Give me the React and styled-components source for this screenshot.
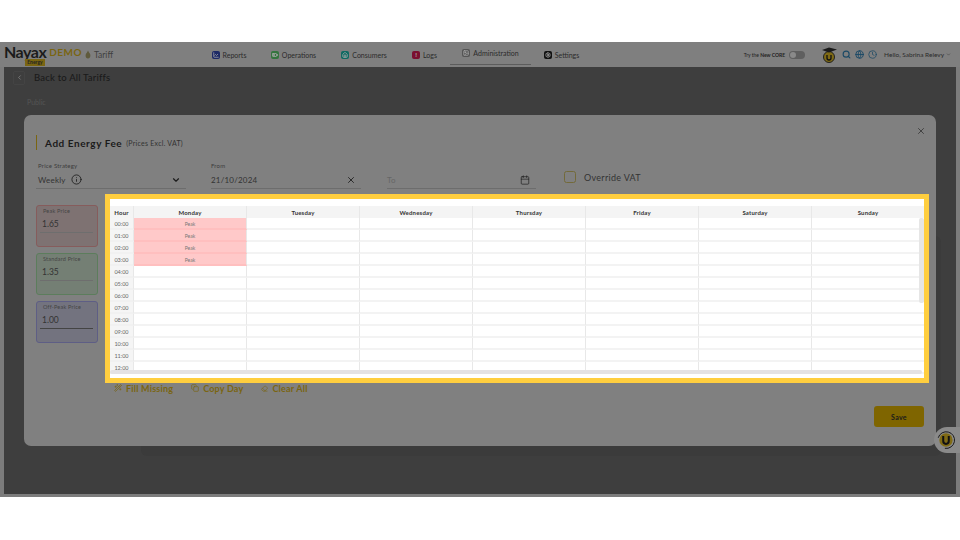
import React from 'react';
import styled, { createGlobalStyle } from 'styled-components';
import {
  ChevronLeft, ChevronDown, X, Calendar, Info, Search, Globe, Clock, Wand2, Copy, Eraser,
  LineChart, BatteryMedium, Home, Image, Settings,
} from 'lucide-react';

const Global = createGlobalStyle`
  html, body { margin: 0; padding: 0; background: #fff; }
  body { font-family: Lato, "Noto Sans", sans-serif; overflow: hidden; }
  * { box-sizing: border-box; }
`;

const Page = styled.div`
  width: 960px;
  height: 540px;
  padding: 42px 0 43px;
`;

const Frame = styled.div`
  position: relative;
  height: 455px;
  background: #3e3e3e;
  border-left: 4px solid #7c7c7c;
  border-right: 4px solid #7c7c7c;
  border-bottom: 3px solid #7c7c7c;
  display: flex;
  flex-direction: column;
`;

const Header = styled.div`
  height: 25px;
  margin: 0 -4px;
  background: #7f7f7f;
  display: flex;
  align-items: center;
  padding: 0 9px 0 4px;
  flex: none;
`;

const Logo = styled.div`
  position: relative;
  width: 74px;
  height: 22px;
  display: flex;
  align-items: flex-start;
  gap: 3px;
  margin-top: 1px;
  flex: none;
`;

const LogoWord = styled.span`
  font: 700 16px/14px Lato, sans-serif;
  margin-top: 1px;
  color: #1b1b1b;
  letter-spacing: -0.5px;
`;

const LogoDemo = styled.span`
  font: 700 10px/14px Lato, sans-serif;
  margin-top: 1px;
  color: #7a6511;
  letter-spacing: 0.5px;
`;

const LogoTag = styled.span`
  position: absolute;
  left: 21px;
  top: 15px;
  width: 20px;
  height: 7px;
  background: #7a6511;
  color: #222;
  font: 700 5px/7px Lato, sans-serif;
  text-align: center;
`;

const Crumb = styled.div`
  margin-left: 7px;
  display: flex;
  align-items: center;
  gap: 3px;
  color: #404040;
  font-size: 8.5px;
  width: 118px;
  flex: none;
`;

const Nav = styled.nav`
  display: flex;
  height: 25px;
  margin-left: 8px;
`;

const NavItem = styled.div`
  height: ${p => (p.$active ? '23px' : '25px')};
  display: flex;
  align-items: center;
  justify-content: center;
  gap: 3px;
  width: ${p => p.$w}px;
  margin-right: ${p => p.$gap}px;
  font-size: 7px;
  color: #2b2b2b;
  border-bottom: ${p => (p.$active ? '1px solid #5c5c5c' : 'none')};
`;

const NavIcon = styled.span`
  width: 8px;
  height: 8px;
  border-radius: 2px;
  background: ${p => p.$color};
  color: #a9a9a9;
  flex: none;
  display: flex;
  align-items: center;
  justify-content: center;
  font-size: 6px;
  font-weight: 900;
  line-height: 8px;
`;

const HeaderRight = styled.div`
  margin-left: auto;
  display: flex;
  align-items: center;
`;

const TryText = styled.span`
  font-size: 5px;
  color: #222;
  white-space: nowrap;
  b { font-weight: 700; }
`;

const Toggle = styled.span`
  width: 16px;
  height: 8px;
  margin-left: 4px;
  border-radius: 5px;
  background: #5f5f5f;
  display: flex;
  align-items: center;
  padding-left: 1px;
  &::before {
    content: '';
    width: 6px;
    height: 6px;
    border-radius: 50%;
    background: #8a8a8a;
  }
`;

const Grad = styled.svg`
  margin-left: 17px;
  flex: none;
`;

const Tools = styled.div`
  display: flex;
  gap: 4px;
  margin-left: 5px;
  color: #1c4a66;
  align-items: center;
`;

const Hello = styled.span`
  margin-left: 7px;
  font-size: 6.5px;
  color: #2b2b2b;
  display: flex;
  align-items: center;
  gap: 2px;
  white-space: nowrap;
`;

const Backdrop = styled.div`
  flex: 1;
  padding: 0 20px;
  display: flex;
  flex-direction: column;
  color: #222;
`;

const BackRow = styled.div`
  height: 21px;
  display: flex;
  align-items: center;
  gap: 9px;
  font-size: 9.5px;
  font-weight: 500;
  color: #1a1a1a;
  letter-spacing: 0.2px;
  margin-left: -11px;
`;

const BackBox = styled.span`
  width: 12px;
  height: 14px;
  border: 1px solid #444;
  border-radius: 2px;
  display: flex;
  align-items: center;
  justify-content: center;
  color: #999;
`;

const PublicLabel = styled.div`
  margin: 10px 0 0 3px;
  height: 10px;
  font-size: 7px;
  color: #555;
`;

const GhostPanel = styled.div`
  position: absolute;
  top: 194px;
  left: 137px;
  right: 15px;
  bottom: 38px;
  background: #3b3b3b;
  border-radius: 6px;
`;

const Modal = styled.div`
  margin-top: 7px;
  height: 331px;
  background: #808080;
  border-radius: 7px;
  padding: 20px 7px 0 12px;
  display: flex;
  flex-direction: column;
  position: relative;
  z-index: 1;
`;

const CloseBtn = styled.span`
  position: absolute;
  top: 11px;
  right: 10px;
  color: #222;
  display: flex;
`;

const TitleRow = styled.div`
  display: flex;
  align-items: center;
  border-left: 1.5px solid #7a6511;
  height: 15px;
  padding-left: 8px;
  gap: 4px;
`;

const Title = styled.span`
  font-size: 10px;
  font-weight: 700;
  color: #1b1b1b;
  letter-spacing: 0.55px;
`;

const TitleNote = styled.span`
  font-size: 7px;
  color: #333;
  letter-spacing: 0.25px;
`;

const FieldRow = styled.div`
  display: flex;
  margin-top: 11px;
  height: 28px;
`;

const Field = styled.div`
  width: ${p => p.$w}px;
  margin-right: ${p => p.$gap}px;
  padding-left: ${p => p.$pl || 0}px;
  padding-right: ${p => p.$pr}px;
  border-bottom: 1px solid #6d6d6d;
  display: flex;
  flex-direction: column;
  height: 28px;
`;

const FieldLabel = styled.label`
  font-size: 6px;
  color: #3c3c3c;
  height: 10px;
  letter-spacing: 0.2px;
  line-height: 10px;
`;

const FieldValue = styled.div`
  display: flex;
  align-items: center;
  gap: 5px;
  height: 13px;
  margin-top: 2px;
  font-size: 8px;
  color: ${p => (p.$muted ? '#666' : '#333')};
  letter-spacing: 0.2px;
  svg { color: #1b1b1b; }
  svg:last-child { margin-left: auto; }
`;

const Check = styled.div`
  display: flex;
  align-items: center;
  gap: 8px;
  height: 22px;
  font-size: 9px;
  color: #333;
  letter-spacing: 0.3px;
  margin-top: 5px;
  &::before {
    content: '';
    width: 10px;
    height: 10px;
    border: 1px solid #736a3a;
    border-radius: 2.5px;
  }
`;

const Body = styled.div`
  display: flex;
  margin-top: 5px;
  height: 189px;
`;

const Prices = styled.div`
  width: 62px;
  display: flex;
  flex-direction: column;
  gap: 6px;
  padding-top: 11px;
  flex: none;
`;

const PriceCard = styled.div`
  height: 42px;
  border: 1px solid ${p => p.$color};
  border-radius: 3px;
  background: ${p => p.$bg};
  padding: 1px 4px 0 3px;
  display: flex;
  flex-direction: column;
  align-items: stretch;
`;

const PriceLabel = styled.span`
  font-size: 5.5px;
  line-height: 8px;
  padding-left: 3px;
  color: #444;
  letter-spacing: 0.2px;
  white-space: nowrap;
`;

const PriceValue = styled.span`
  font-size: 8.5px;
  line-height: 14px;
  padding: 2px 0 1px 2px;
  height: 18px;
  color: #333;
  border-bottom: 1px solid ${p => (p.$focus ? '#444' : '#6e6e6e')};
`;

const Highlight = styled.div`
  width: 824px;
  height: 189px;
  margin-left: 7px;
  background: #fff;
  border: 5px solid #ffce3f;
  display: flex;
  flex-direction: column;
  flex: none;
`;

const Schedule = styled.div`
  margin-top: 7px;
  height: 169px;
  overflow: hidden;
  position: relative;
`;

const Row = styled.div`
  display: grid;
  grid-template-columns: 24px repeat(7, 113px);
  height: 12px;
`;

const HeadCell = styled.div`
  background: #f4f4f4;
  border-right: 1px solid #e8e8e8;
  font-size: 6px;
  font-weight: 700;
  color: #333;
  display: flex;
  align-items: center;
  justify-content: center;
  letter-spacing: 0.2px;
`;

const HourCell = styled.div`
  background: #f5f5f5;
  border-right: 1px solid #e8e8e8;
  border-bottom: 2px solid #f1f1f1;
  padding-top: 1px;
  font-size: 5.5px;
  color: #666;
  display: flex;
  align-items: center;
  justify-content: center;
`;

const SlotCell = styled.div`
  background: ${p => (p.$peak ? '#ffc9c9' : '#fff')};
  border-right: 1px solid #e8e8e8;
  border-bottom: 2px solid ${p => (p.$peak ? '#ffbfbf' : '#f3f3f3')};
  padding-top: 1px;
  font-size: 5px;
  color: #777;
  display: flex;
  align-items: center;
  justify-content: center;
`;

const ScrollY = styled.span`
  position: absolute;
  right: 0;
  top: 12px;
  width: 5px;
  height: 85px;
  background: #e6e6e6;
  border-radius: 2px;
`;

const ScrollX = styled.span`
  position: absolute;
  left: 0;
  right: 2px;
  bottom: 1px;
  height: 4px;
  background: #e4e2e4;
  border-radius: 2px;
`;

const Actions = styled.div`
  display: flex;
  gap: 18px;
  margin-left: 78px;
  height: 10px;
  align-items: center;
`;

const ActionBtn = styled.span`
  display: flex;
  align-items: center;
  gap: 4px;
  font-size: 9px;
  font-weight: 700;
  color: #7a6511;
  letter-spacing: 0.2px;
`;

const Footer = styled.div`
  display: flex;
  justify-content: flex-end;
  margin-top: 13px;
`;

const SaveBtn = styled.button`
  width: 50px;
  height: 21px;
  margin-right: 5px;
  border: none;
  border-radius: 3px;
  background: #7f6500;
  color: #1b1b1b;
  font: 700 7px Lato, sans-serif;
  letter-spacing: 0.3px;
  padding: 0;
`;

const HelpBubble = styled.div`
  position: absolute;
  right: -4px;
  top: 385px;
  width: 26px;
  height: 26px;
  border-radius: 13px 0 0 13px;
  background: #8a8a8a;
  display: flex;
  align-items: center;
  padding-left: 2px;
  z-index: 2;
`;

const hours = ['00:00', '01:00', '02:00', '03:00', '04:00', '05:00', '06:00', '07:00', '08:00', '09:00', '10:00', '11:00', '12:00'];
const days = ['Monday', 'Tuesday', 'Wednesday', 'Thursday', 'Friday', 'Saturday', 'Sunday'];

const navItems = [
  { label: 'Reports', color: '#1d2a66', w: 36, gap: 23, icon: <LineChart size={6} strokeWidth={3} /> },
  { label: 'Operations', color: '#35753f', w: 47, gap: 24, icon: <BatteryMedium size={6} strokeWidth={3} /> },
  { label: 'Consumers', color: '#0f6a62', w: 46, gap: 24, icon: <Home size={6} strokeWidth={3} /> },
  { label: 'Logs', color: '#7a1030', w: 27, gap: 12, icon: '!' },
  { label: 'Administration', color: '#555', w: 81, gap: 12, active: true, icon: <Image size={6} strokeWidth={3} /> },
  { label: 'Settings', color: '#111', w: 37, gap: 0, icon: <Settings size={6} strokeWidth={3} /> },
];

function Grid() {
  return (
    <Schedule>
      <Row>
        <HeadCell>Hour</HeadCell>
        {days.map(d => <HeadCell key={d}>{d}</HeadCell>)}
      </Row>
      {hours.map((h, i) => (
        <Row key={h}>
          <HourCell>{h}</HourCell>
          {days.map((d, j) => (
            <SlotCell key={d} $peak={j === 0 && i < 4}>{j === 0 && i < 4 ? 'Peak' : ''}</SlotCell>
          ))}
        </Row>
      ))}
      <ScrollY />
      <ScrollX />
    </Schedule>
  );
}

export default function App() {
  return (
    <Page>
      <Global />
      <Frame>
        <Header>
          <Logo>
            <LogoWord>Nayax</LogoWord>
            <LogoDemo>DEMO</LogoDemo>
            <LogoTag>Energy</LogoTag>
          </Logo>
          <Crumb>
            <svg width="6" height="9" viewBox="0 0 6 9"><path d="M3 0.5 L4 2.5 C6 4 6 8.5 3 8.5 C0 8.5 0 4 2 2.5 Z" fill="#5f5a3c" /></svg>
            Tariff
          </Crumb>
          <Nav>
            {navItems.map(n => (
              <NavItem key={n.label} $w={n.w} $gap={n.gap} $active={n.active}>
                <NavIcon $color={n.color}>{n.icon}</NavIcon>
                {n.label}
              </NavItem>
            ))}
          </Nav>
          <HeaderRight>
            <TryText>Try the <b>New CORE</b></TryText>
            <Toggle />
            <Grad width="15" height="16" viewBox="0 0 15 16">
              <circle cx="7" cy="10" r="5.5" fill="#7f6a14" stroke="#222" strokeWidth="1" />
              <path d="M0 3 L7 0.5 L15 2.5 L7 5.5 Z" fill="#1b1b1b" />
              <path d="M5 8 V11 A2 2 0 0 0 9 11 V8" fill="none" stroke="#111" strokeWidth="1.3" />
            </Grad>
            <Tools>
              <Search size={9} strokeWidth={3} />
              <Globe size={9} strokeWidth={2.5} />
              <Clock size={9} strokeWidth={2} />
            </Tools>
            <Hello>Hello, Sabrina Relevy <ChevronDown size={5} /></Hello>
          </HeaderRight>
        </Header>
        <GhostPanel />
        <Backdrop>
          <BackRow>
            <BackBox><ChevronLeft size={7} /></BackBox>
            Back to All Tariffs
          </BackRow>
          <PublicLabel>Public</PublicLabel>
          <Modal>
            <CloseBtn><X size={10} strokeWidth={1.6} /></CloseBtn>
            <TitleRow>
              <Title>Add Energy Fee</Title>
              <TitleNote>(Prices Excl. VAT)</TitleNote>
            </TitleRow>
            <FieldRow>
              <Field $w={150} $gap={25} $pl={2} $pr={5}>
                <FieldLabel>Price Strategy</FieldLabel>
                <FieldValue>
                  Weekly <Info size={11} strokeWidth={1.8} />
                  <ChevronDown size={10} strokeWidth={2.8} />
                </FieldValue>
              </Field>
              <Field $w={150} $gap={26} $pr={5}>
                <FieldLabel>From</FieldLabel>
                <FieldValue>21/10/2024 <X size={10} strokeWidth={2} /></FieldValue>
              </Field>
              <Field $w={149} $gap={28} $pr={6}>
                <FieldLabel />
                <FieldValue $muted>To <Calendar size={10} strokeWidth={1.6} /></FieldValue>
              </Field>
              <Check>Override VAT</Check>
            </FieldRow>
            <Body>
              <Prices>
                <PriceCard $color="#865c5c" $bg="#7e7272">
                  <PriceLabel>Peak Price</PriceLabel>
                  <PriceValue>1.65</PriceValue>
                </PriceCard>
                <PriceCard $color="#5c7d5c" $bg="#747f74">
                  <PriceLabel>Standard Price</PriceLabel>
                  <PriceValue>1.35</PriceValue>
                </PriceCard>
                <PriceCard $color="#5e5e85" $bg="#73737f">
                  <PriceLabel>Off-Peak Price</PriceLabel>
                  <PriceValue $focus>1.00</PriceValue>
                </PriceCard>
              </Prices>
              <Highlight>
                <Grid />
              </Highlight>
            </Body>
            <Actions>
              <ActionBtn><Wand2 size={8} />Fill Missing</ActionBtn>
              <ActionBtn><Copy size={8} />Copy Day</ActionBtn>
              <ActionBtn><Eraser size={7} />Clear All</ActionBtn>
            </Actions>
            <Footer>
              <SaveBtn>Save</SaveBtn>
            </Footer>
          </Modal>
        </Backdrop>
        <HelpBubble>
          <svg width="20" height="20" viewBox="0 0 18 18">
            <circle cx="9" cy="9" r="6" fill="#7f6a14" />
            <path d="M2 7 A7.5 7.5 0 1 1 8 16.5" fill="none" stroke="#1b1b1b" strokeWidth="0.9" />
            <path d="M6.5 5.5 V10 A2.5 2.5 0 0 0 11.5 10 V5.5" fill="none" stroke="#111" strokeWidth="1.8" />
          </svg>
        </HelpBubble>
      </Frame>
    </Page>
  );
}
